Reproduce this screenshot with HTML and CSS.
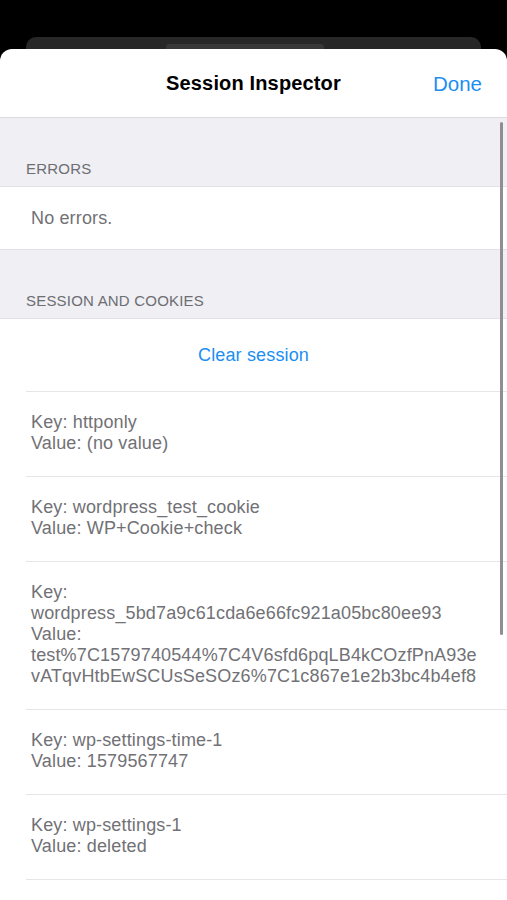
FILE: index.html
```html
<!DOCTYPE html>
<html lang="en">
<head>
<meta charset="utf-8">
<title>Session Inspector</title>
<link rel="stylesheet" href="styles.css">
</head>
<body>
<div class="backdrop">
  <div class="behind-card"><div class="behind-pill"></div></div>
</div>
<div class="sheet">
  <header class="nav">
    <h1 class="nav-title">Session Inspector</h1>
    <span class="nav-done">Done</span>
  </header>
  <div class="content">
    <div class="section-header">ERRORS</div>
    <div class="group">
      <div class="cell cell-plain">No errors.</div>
    </div>
    <div class="section-header">SESSION AND COOKIES</div>
    <div class="group group-last">
      <div class="cell cell-action">Clear session</div>
      <div class="cell cell-kv"><div class="kv">Key: httponly<br>Value: (no value)</div></div>
      <div class="cell cell-kv"><div class="kv">Key: wordpress_test_cookie<br>Value: WP+Cookie+check</div></div>
      <div class="cell cell-kv"><div class="kv">Key:<br>wordpress_5bd7a9c61cda6e66fc921a05bc80ee93<br>Value:<br>test%7C1579740544%7C4V6sfd6pqLB4kCOzfPnA93e<br>vATqvHtbEwSCUsSeSOz6%7C1c867e1e2b3bc4b4ef8</div></div>
      <div class="cell cell-kv"><div class="kv">Key: wp-settings-time-1<br>Value: 1579567747</div></div>
      <div class="cell cell-kv"><div class="kv">Key: wp-settings-1<br>Value: deleted</div></div>
      <div class="cell cell-kv cell-more"></div>
    </div>
    <div class="scrollbar"></div>
  </div>
</div>
</body>
</html>
```

FILE: styles.css
```css
html, body {
  margin: 0;
  padding: 0;
  background: #000;
  height: 900px;
  overflow: hidden;
  font-family: "Liberation Sans", Arial, sans-serif;
}

.backdrop {
  height: 49px;
  padding-top: 37px;
  box-sizing: border-box;
  display: flex;
  justify-content: center;
}

.behind-card {
  width: 455px;
  height: 12px;
  background: #272727;
  border-radius: 10px 10px 0 0;
  display: flex;
  justify-content: center;
  padding-top: 7px;
  box-sizing: border-box;
}

.behind-pill {
  width: 158px;
  height: 5px;
  background: #383838;
  border-radius: 3px 3px 0 0;
  margin-left: -17px;
}

.sheet {
  background: #fff;
  border-radius: 12px 12px 0 0;
  height: 851px;
  overflow: hidden;
  display: flex;
  flex-direction: column;
}

.nav {
  height: 69px;
  flex: none;
  display: flex;
  align-items: center;
  justify-content: center;
  position: relative;
  border-bottom: 1px solid #dcdce0;
  box-sizing: border-box;
}

.nav-title {
  margin: 0;
  font-size: 20px;
  font-weight: 700;
  color: #000;
  letter-spacing: 0.15px;
  padding-top: 1px;
}

.nav-done {
  position: absolute;
  right: 25px;
  top: 23px;
  font-size: 20.5px;
  color: #1b8ef2;
}

.content {
  flex: 1;
  background: #efeff4;
  position: relative;
}

.section-header {
  height: 68px;
  box-sizing: border-box;
  padding: 0 26px 9px;
  display: flex;
  align-items: flex-end;
  font-size: 15px;
  color: #6d6d72;
  letter-spacing: 0.2px;
}

.group {
  background: #fff;
  border-top: 1px solid #e2e2e6;
  border-bottom: 1px solid #e2e2e6;
}

.cell {
  font-size: 18px;
  letter-spacing: 0.15px;
  color: #717176;
}

.cell-plain {
  height: 62px;
  display: flex;
  align-items: center;
  padding-left: 31px;
}

.cell-action {
  height: 72px;
  display: flex;
  align-items: center;
  justify-content: center;
  color: #1b8ef2;
  padding-top: 1px;
  box-sizing: border-box;
}

.cell-kv {
  margin-left: 26px;
  border-top: 1px solid #e6e6ea;
  padding: 20px 0 22px 5px;
}

.cell-more {
  height: 60px;
}

.kv {
  line-height: 21px;
  white-space: nowrap;
}

.scrollbar {
  position: absolute;
  right: 4px;
  top: 4px;
  width: 3px;
  height: 513px;
  background: #8e8e93;
  border-radius: 2px;
}
```
